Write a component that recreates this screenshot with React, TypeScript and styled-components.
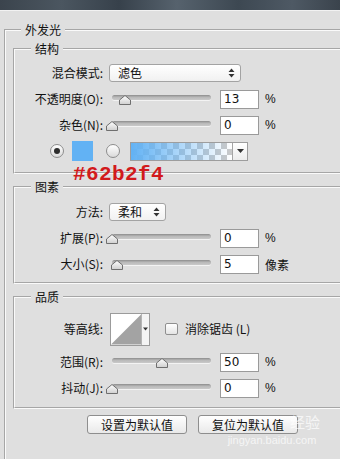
import styled, { createGlobalStyle } from 'styled-components'

const GlobalStyle = createGlobalStyle`
  html,
  body {
    margin: 0;
    padding: 0;
    background: #dfdfdf;
    overflow: hidden;
  }
  body {
    font-family: 'Noto Sans CJK SC', 'Liberation Sans', sans-serif;
    font-size: 12px;
    color: #111;
  }
`

const Page = styled.div`
  position: relative;
  width: 340px;
  height: 459px;
  overflow: hidden;
  background: #dfdfdf;
`

const TopBand = styled.div`
  height: 10px;
  background: linear-gradient(90deg, #3b444d 0%, #4b5660 18%, #37414b 35%, #56626d 52%, #3d4852 70%, #4e5964 86%, #3a434c 100%);
  border-bottom: 1px solid #f2f2f2;
`

const Group = styled.fieldset<{ $width: number }>`
  position: relative;
  margin: 0;
  padding: 0;
  width: ${({ $width }) => $width}px;
  box-sizing: border-box;
  border: 2px groove #fafafa;
  min-inline-size: 0;
`

const Outer = styled(Group)`
  margin: 12px 0 0 4px;
  padding: 5px 0 60px 7px;
`

const Section = styled(Group)<{ $pt: number; $pb: number; $mt: number }>`
  margin-top: ${({ $mt }) => $mt}px;
  padding: ${({ $pt }) => $pt}px 0 ${({ $pb }) => $pb}px 0;
`

const Legend = styled.legend<{ $ml: number }>`
  margin-left: ${({ $ml }) => $ml}px;
  padding: 0 4px;
  font-size: 12px;
  line-height: 14px;
  color: #111;
`

const Row = styled.div<{ $h?: number }>`
  position: relative;
  display: flex;
  align-items: center;
  height: ${({ $h }) => $h ?? 26}px;
`

const Label = styled.span`
  width: 88px;
  flex: none;
  text-align: right;
  white-space: nowrap;
  line-height: 14px;
`

const Select = styled.div<{ $w: number }>`
  display: flex;
  align-items: center;
  justify-content: space-between;
  margin-left: 6px;
  width: ${({ $w }) => $w}px;
  height: 18px;
  box-sizing: border-box;
  padding: 0 5px 0 8px;
  border: 1px solid #a3a3a3;
  border-radius: 3px;
  background: linear-gradient(#ffffff, #f1f1f1);
  line-height: 14px;
`

const SliderWrap = styled.div`
  position: relative;
  margin-left: 9px;
  width: 99px;
  height: 26px;
  display: flex;
  align-items: center;
  flex: none;
`

const Track = styled.div`
  width: 100%;
  height: 5px;
  margin-top: -4px;
  border-radius: 3px;
  background: linear-gradient(#8c8c8c, #b9b9b9 45%, #c9c9c9);
  box-shadow: 0 1px 0 #f3f3f3;
`

const Thumb = styled.svg`
  position: absolute;
  top: 9px;
  width: 12px;
  height: 10px;
`

const NumBox = styled.div`
  margin-left: 9px;
  width: 39px;
  height: 19px;
  box-sizing: border-box;
  padding-left: 3px;
  border: 1px solid #9a9a9a;
  background: #fff;
  font-family: 'DejaVu Sans', 'Liberation Sans', sans-serif;
  font-size: 12px;
  line-height: 17px;
  flex: none;
`

const Unit = styled.span`
  margin-left: 6px;
  font-family: 'Liberation Sans', 'Noto Sans CJK SC', sans-serif;
  font-size: 12px;
`

const UnitCjk = styled.span`
  margin-left: 6px;
  font-size: 12px;
`

const Radio = styled.span<{ $on?: boolean; $ml: number }>`
  display: inline-flex;
  align-items: center;
  justify-content: center;
  margin-left: ${({ $ml }) => $ml}px;
  width: 14px;
  height: 14px;
  box-sizing: border-box;
  border: 1px solid #8d8d8d;
  border-radius: 50%;
  background: linear-gradient(#ffffff, #dadada);
  flex: none;
  &::after {
    content: '';
    display: ${({ $on }) => ($on ? 'block' : 'none')};
    width: 6px;
    height: 6px;
    border-radius: 50%;
    background: #2c2c2c;
  }
`

const Swatch = styled.span`
  margin-left: 8px;
  width: 21px;
  height: 20px;
  background: #62b2f4;
  flex: none;
`

const GradientBar = styled.div`
  display: flex;
  margin-left: 10px;
  width: 118px;
  height: 19px;
  box-sizing: border-box;
  border: 1px solid #9d9d9d;
  flex: none;
`

const GradientFill = styled.div`
  flex: 1;
  background:
    linear-gradient(90deg, #62b2f4 0%, rgba(98, 178, 244, 0.65) 35%, rgba(98, 178, 244, 0) 100%),
    repeating-conic-gradient(#c9c9c9 0% 25%, #ffffff 0% 50%) 0 0 / 12px 12px;
`

const DropStrip = styled.div`
  display: flex;
  align-items: center;
  justify-content: center;
  width: 14px;
  border-left: 1px solid #a5a5a5;
  background: linear-gradient(#ffffff, #ececec);
`

const Note = styled.span`
  position: absolute;
  left: 58px;
  top: 26px;
  font-family: 'Liberation Mono', 'DejaVu Sans Mono', monospace;
  font-weight: bold;
  font-size: 21px;
  line-height: 21px;
  color: #d21a1c;
  letter-spacing: 0.4px;
`

const Contour = styled.div`
  display: flex;
  margin-left: 7px;
  width: 40px;
  height: 33px;
  box-sizing: border-box;
  border: 1px solid #9b9b9b;
  background: #fff;
  flex: none;
`

const ContourDrop = styled.div`
  display: flex;
  align-items: center;
  justify-content: center;
  width: 7px;
  border-left: 1px solid #b4b4b4;
  background: #f4f4f4;
`

const Check = styled.span`
  margin-left: 15px;
  width: 13px;
  height: 12px;
  box-sizing: border-box;
  border: 1px solid #8f8f8f;
  border-radius: 2px;
  background: linear-gradient(#ffffff, #e4e4e4);
  flex: none;
`

const CheckText = styled.span`
  margin-left: 7px;
  line-height: 14px;
`

const Buttons = styled.div`
  display: flex;
  gap: 11px;
  margin: 6px 0 0 74px;
`

const Button = styled.div`
  width: 100px;
  height: 19px;
  box-sizing: border-box;
  border: 1px solid #8e8e8e;
  border-radius: 3px;
  background: linear-gradient(#ffffff, #e9e9e9);
  text-align: center;
  line-height: 17px;
  font-size: 12px;
`

const Watermark = styled.div`
  position: absolute;
  left: 222px;
  top: 412px;
  width: 100px;
  color: rgba(255, 255, 255, 0.7);
  font-family: 'Liberation Sans', sans-serif;
  pointer-events: none;
`

const MarkTitle = styled.div`
  margin-left: 68px;
  font-family: 'Noto Sans CJK SC', sans-serif;
  font-size: 15px;
  line-height: 20px;
`

const MarkUrl = styled.div`
  margin-top: 2px;
  font-size: 11px;
  line-height: 12px;
  text-align: center;
`

const UpDown = () => (
  <svg width="7" height="10" viewBox="0 0 7 10">
    <path d="M3.5 0.5 L6.5 4 L0.5 4 Z M3.5 9.5 L6.5 6 L0.5 6 Z" fill="#333" />
  </svg>
)

const DownArrow = ({ size = 7 }: { size?: number }) => (
  <svg width={size} height={4} viewBox="0 0 7 4">
    <path d="M0 0 L7 0 L3.5 4 Z" fill="#333" />
  </svg>
)

const Slider = ({ value }: { value: number }) => (
  <SliderWrap>
    <Track />
    <Thumb viewBox="0 0 12 10" style={{ left: Math.round((value / 100) * 99) - 6 }}>
      <defs>
        <linearGradient id="thumbFill" x1="0" y1="0" x2="0" y2="1">
          <stop offset="0" stopColor="#ffffff" />
          <stop offset="1" stopColor="#cfcfcf" />
        </linearGradient>
      </defs>
      <path d="M6 0.5 L11.5 5 L11.5 9.5 L0.5 9.5 L0.5 5 Z" fill="url(#thumbFill)" stroke="#6f6f6f" strokeWidth="1" />
    </Thumb>
  </SliderWrap>
)

const SliderRow = ({ label, value, unit }: { label: string; value: number; unit: string }) => (
  <Row>
    <Label>{label}</Label>
    <Slider value={value} />
    <NumBox>{value}</NumBox>
    {unit === '%' ? <Unit>%</Unit> : <UnitCjk>{unit}</UnitCjk>}
  </Row>
)

const App = () => {
  return (
    <Page>
      <GlobalStyle />
      <TopBand />
      <Outer $width={360}>
        <Legend $ml={8}>外发光</Legend>

        <Section $width={345} $mt={0} $pt={4} $pb={8}>
          <Legend $ml={16}>结构</Legend>
          <Row>
            <Label>混合模式:</Label>
            <Select $w={132}>
              <span>滤色</span>
              <UpDown />
            </Select>
          </Row>
          <SliderRow label="不透明度(O):" value={13} unit="%" />
          <SliderRow label="杂色(N):" value={0} unit="%" />
          <Row style={{ paddingLeft: 35 }}>
            <Radio $on $ml={0} />
            <Swatch />
            <Radio $ml={13} />
            <GradientBar>
              <GradientFill />
              <DropStrip>
                <DownArrow />
              </DropStrip>
            </GradientBar>
            <Note>#62b2f4</Note>
          </Row>
        </Section>

        <Section $width={345} $mt={6} $pt={5} $pb={5}>
          <Legend $ml={16}>图素</Legend>
          <Row>
            <Label>方法:</Label>
            <Select $w={57}>
              <span>柔和</span>
              <UpDown />
            </Select>
          </Row>
          <SliderRow label="扩展(P):" value={0} unit="%" />
          <SliderRow label="大小(S):" value={5} unit="像素" />
        </Section>

        <Section $width={345} $mt={6} $pt={5} $pb={6}>
          <Legend $ml={16}>品质</Legend>
          <Row $h={40}>
            <Label>等高线:</Label>
            <Contour>
              <svg width="31" height="31" viewBox="0 0 31 31">
                <path d="M0 31 L31 0 L31 31 Z" fill="#a3a3a3" />
              </svg>
              <ContourDrop>
                <DownArrow size={5} />
              </ContourDrop>
            </Contour>
            <Check />
            <CheckText>消除锯齿 (L)</CheckText>
          </Row>
          <SliderRow label="范围(R):" value={50} unit="%" />
          <SliderRow label="抖动(J):" value={0} unit="%" />
        </Section>

        <Buttons>
          <Button>设置为默认值</Button>
          <Button>复位为默认值</Button>
        </Buttons>
      </Outer>

      <Watermark>
        <MarkTitle>经验</MarkTitle>
        <MarkUrl>jingyan.baidu.com</MarkUrl>
      </Watermark>
    </Page>
  )
}

export default App
